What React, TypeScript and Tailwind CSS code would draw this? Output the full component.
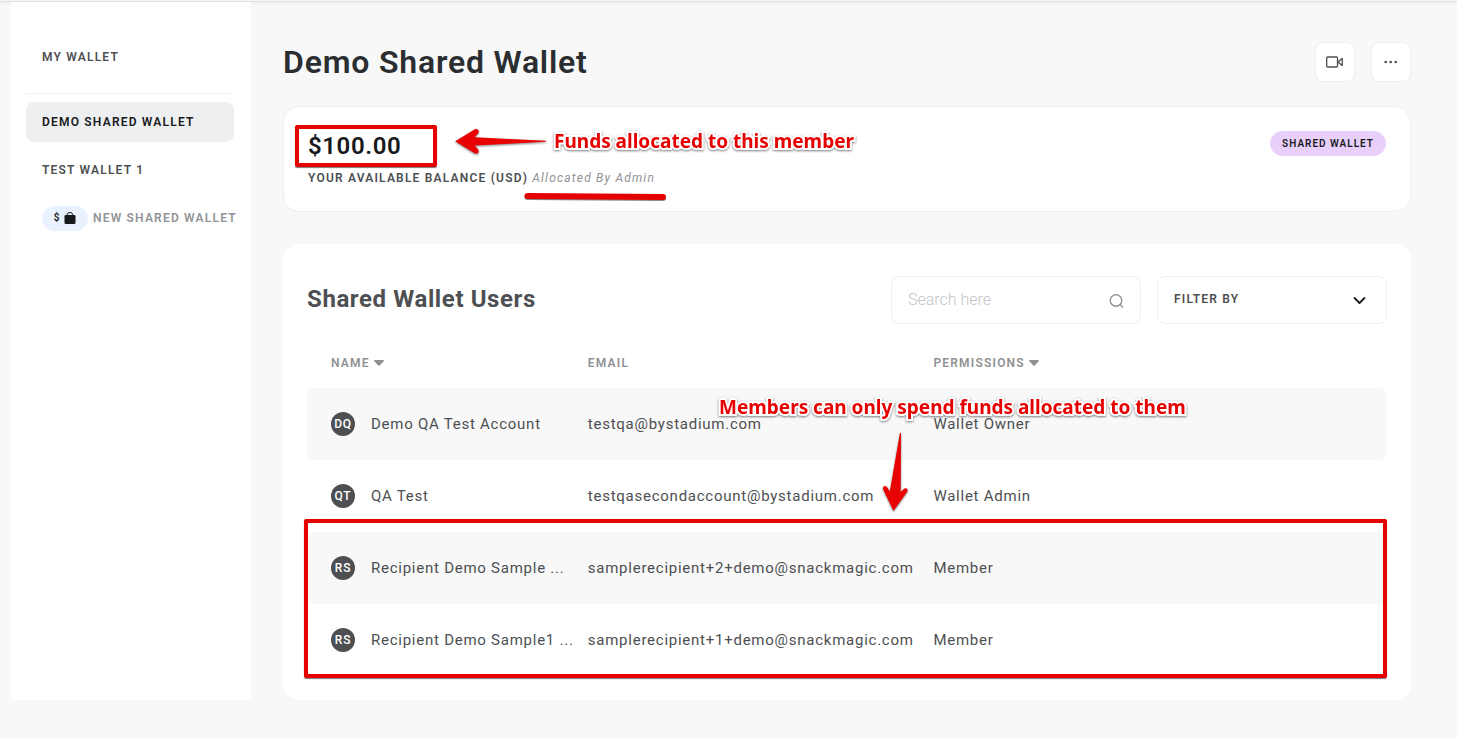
const members = [
  { initials: "DQ", name: "Demo QA Test Account", email: "testqa@bystadium.com", role: "Wallet Owner" },
  { initials: "QT", name: "QA Test", email: "testqasecondaccount@bystadium.com", role: "Wallet Admin" },
  { initials: "RS", name: "Recipient Demo Sample ...", email: "samplerecipient+2+demo@snackmagic.com", role: "Member" },
  { initials: "RS", name: "Recipient Demo Sample1 ...", email: "samplerecipient+1+demo@snackmagic.com", role: "Member" },
];

function SortArrow() {
  return (
    <svg width="10" height="6" viewBox="0 0 10 6" aria-hidden="true">
      <path d="M0.8 0h8.4c.7 0 1 .8.5 1.3L5.7 5.5a1 1 0 0 1-1.4 0L.3 1.3C-.2.8.1 0 .8 0z" fill="#8f9194" />
    </svg>
  );
}

function NoteText({ children }: { children: string }) {
  return (
    <span className="whitespace-nowrap font-['Noto_Sans',sans-serif] text-[19px] font-bold leading-6 text-[#e60000] [-webkit-text-stroke:4px_white] [paint-order:stroke_fill] drop-shadow-[0_1px_1px_rgba(0,0,0,0.5)]">
      {children}
    </span>
  );
}

function Sidebar() {
  const link = "flex h-10 items-center whitespace-nowrap rounded-lg px-4 text-xs font-semibold tracking-widest";
  return (
    <nav aria-label="Wallets" className="ml-[11px] w-60 shrink-0 bg-white pl-[15px] pr-[17px] pt-[35px]">
      <a href="#my-wallet" className={`${link} text-[#4d4f52]`}>MY WALLET</a>
      <hr className="mb-2 mt-4 border-[#eeeff0]" />
      <a href="#demo" aria-current="page" className={`${link} mb-2 bg-[#eeeff1] text-[#17191c]`}>DEMO SHARED WALLET</a>
      <a href="#test" className={`${link} mb-2 text-[#4d4f52]`}>TEST WALLET 1</a>
      <a href="#new" className={`${link} gap-[5px] text-[#929396]`}>
        <span className="flex h-[25px] w-[46px] shrink-0 items-center justify-center gap-[5px] rounded-full bg-[#eaf2ff] text-[10px] tracking-normal text-[#17191c]">
          $
          <svg width="12" height="12" viewBox="0 0 12 12" aria-hidden="true">
            <path d="M3.2 4V2.8a2.7 2.3 0 0 1 5.5 0V4" fill="none" stroke="#17191c" strokeWidth="1" />
            <rect x="0.5" y="3" width="11" height="9" rx="1.3" fill="#17191c" />
          </svg>
        </span>
        NEW SHARED WALLET
      </a>
    </nav>
  );
}

function BalanceCard() {
  return (
    <section className="relative mt-6 flex items-start justify-between rounded-2xl border border-[#eeeeef] bg-white px-6 pb-[21px] pt-6">
      <div>
        <p className="text-2xl font-semibold leading-[30px] tracking-wide text-[#17191c]">$100.00</p>
        <p className="mt-[5px] text-xs leading-6 tracking-widest">
          <span className="font-semibold text-[#4d4f52]">YOUR AVAILABLE BALANCE (USD)</span>{" "}
          <em className="text-[#929396]">Allocated By Admin</em>
        </p>
      </div>
      <span className="flex h-[25px] items-center rounded-full bg-[#e8d0fb] px-3 text-[10px] font-semibold tracking-widest text-[#17191c]">
        SHARED WALLET
      </span>

      <div className="absolute left-[11px] top-[18px] h-[42px] w-[142px] rounded-xs border-4 border-[#e60000] shadow-[0_1px_1px_#777]" />
      <svg className="absolute left-[170px] top-5 drop-shadow-[0_1px_1px_rgba(0,0,0,0.5)]" width="94" height="30" viewBox="0 0 94 30" aria-hidden="true">
        <path d="M1.2 14.2L20.500 2.500c3-1.600 5.500 1.300 3.500 4L20.500 10.200L92 13.700v1L20.500 18.500l3.500 3.800c2 2.700-.5 5.600-3.500 4z" fill="#e80202" />
      </svg>
      <div className="absolute left-[270px] top-[22px] flex">
        <NoteText>Funds allocated to this member</NoteText>
      </div>
      <svg className="absolute left-[240px] top-[84px] drop-shadow-[0_1px_0_#888]" width="144" height="10" viewBox="0 0 144 10" aria-hidden="true">
        <path d="M3.500 5L139 6" stroke="#e60000" strokeWidth="6" strokeLinecap="round" />
      </svg>
    </section>
  );
}

function UsersTable() {
  const head = "h-16 pt-[14px] text-left align-middle text-xs font-semibold tracking-widest text-[#8f9194]";
  return (
    <div className="relative">
      <table className="w-full table-fixed border-separate border-spacing-0">
        <thead>
          <tr>
            <th scope="col" className={`${head} w-[26%] pl-6`}>
              <button type="button" className="flex items-center gap-1 font-semibold tracking-widest">NAME <SortArrow /></button>
            </th>
            <th scope="col" className={`${head} w-[32%]`}>EMAIL</th>
            <th scope="col" className={head}>
              <button type="button" className="flex items-center gap-1 font-semibold tracking-widest">PERMISSIONS <SortArrow /></button>
            </th>
          </tr>
        </thead>
        <tbody className="text-[15px] tracking-wider text-[#4d4f52]">
          {members.map((m) => (
            <tr key={m.email} className="odd:[&>td]:bg-[#f8f8f8]">
              <td className="h-18 rounded-l-lg pl-6">
                <div className="flex items-center gap-4">
                  <span className="flex size-6 shrink-0 items-center justify-center rounded-full bg-[#4d4f52] text-xs font-medium text-white">{m.initials}</span>
                  <span className="whitespace-nowrap">{m.name}</span>
                </div>
              </td>
              <td className="whitespace-nowrap">{m.email}</td>
              <td className="rounded-r-lg">{m.role}</td>
            </tr>
          ))}
        </tbody>
      </table>

      <div className="absolute -bottom-[2px] -left-[3px] right-0 h-[159px] rounded-xs border-4 border-[#e60000] shadow-[0_1px_1px_#777]" />
      <div className="absolute left-[412px] top-[71px] flex">
        <NoteText>Members can only spend funds allocated to them</NoteText>
      </div>
      <svg className="absolute left-[574px] top-[108px] drop-shadow-[0_1px_1px_rgba(0,0,0,0.5)]" width="30" height="82" viewBox="0 0 30 82" aria-hidden="true">
        <path d="M19 1h1l-.3 59 3.300-3.200c2.500-1.800 4.500.3 3.200 3L12.500 79L2.200 57.500c-1-3.500 2-4.500 4-2.300l2.600 4.300z" fill="#e80202" />
      </svg>
    </div>
  );
}

export default function App() {
  const iconButton = "flex size-10 items-center justify-center rounded-lg border border-[#eeeeef] bg-white text-[#4d4f52]";
  return (
    <div className="min-h-screen bg-[#f8f8f8] pb-[39px] pt-px font-[Roboto,sans-serif]">
      <div className="h-px bg-[#dfe0e0] shadow-[0_1px_2px_#e8e8e8]" />
      <div className="flex gap-8">
        <Sidebar />
        <main className="mr-[46px] min-w-0 flex-1 pt-10">
          <header className="flex h-10 items-center justify-between">
            <h1 className="text-[32px] font-semibold leading-10 tracking-wide text-[#2b2e31]">Demo Shared Wallet</h1>
            <div className="flex gap-4">
              <button type="button" aria-label="Watch video" className={iconButton}>
                <svg width="18" height="12" viewBox="0 0 18 12" fill="none" stroke="currentColor" strokeWidth="1.300" strokeLinejoin="round" aria-hidden="true">
                  <rect x="0.700" y="1" width="10.800" height="10" rx="1" />
                  <path d="M12 6l4.200-3.500v7z" />
                </svg>
              </button>
              <button type="button" aria-label="More options" className={iconButton}>
                <svg width="14" height="4" viewBox="0 0 14 4" fill="currentColor" aria-hidden="true">
                  <circle cx="1.700" cy="2" r="1.300" />
                  <circle cx="6.700" cy="2" r="1.300" />
                  <circle cx="11.700" cy="2" r="1.300" />
                </svg>
              </button>
            </div>
          </header>

          <BalanceCard />

          <section className="mt-8 rounded-2xl bg-white px-6 pb-6 pt-8">
            <div className="flex items-center justify-between">
              <h2 className="pb-0.5 text-2xl font-bold leading-8 tracking-wide text-[#4d4f52]">Shared Wallet Users</h2>
              <div className="flex gap-4">
                <label className="flex h-12 w-[250px] items-center rounded-lg border border-[#eeeeef] px-4">
                  <input type="text" aria-label="Search users" placeholder="Search here" className="min-w-0 flex-1 text-base font-light outline-none placeholder:text-[#c4c5c7]" />
                  <svg width="15" height="15" viewBox="0 0 15 15" fill="none" stroke="#8f9194" strokeWidth="1.400" strokeLinecap="round" aria-hidden="true">
                    <circle cx="7" cy="7.500" r="5.800" />
                    <path d="M11.300 11.800L13.500 14" />
                  </svg>
                </label>
                <div className="relative flex">
                  <select aria-label="Filter by" className="h-12 w-[230px] appearance-none rounded-lg border border-[#eeeeef] bg-white px-4 pb-0.5 text-xs font-semibold tracking-widest text-[#4d4f52]">
                    <option>FILTER BY</option>
                  </select>
                  <svg className="pointer-events-none absolute right-5 top-5" width="14" height="9" viewBox="0 0 14 9" fill="none" stroke="#17191c" strokeWidth="1.800" strokeLinecap="round" strokeLinejoin="round" aria-hidden="true">
                    <path d="M1.500 2l5 5 5-5" />
                  </svg>
                </div>
              </div>
            </div>
            <UsersTable />
          </section>
        </main>
      </div>
    </div>
  );
}
